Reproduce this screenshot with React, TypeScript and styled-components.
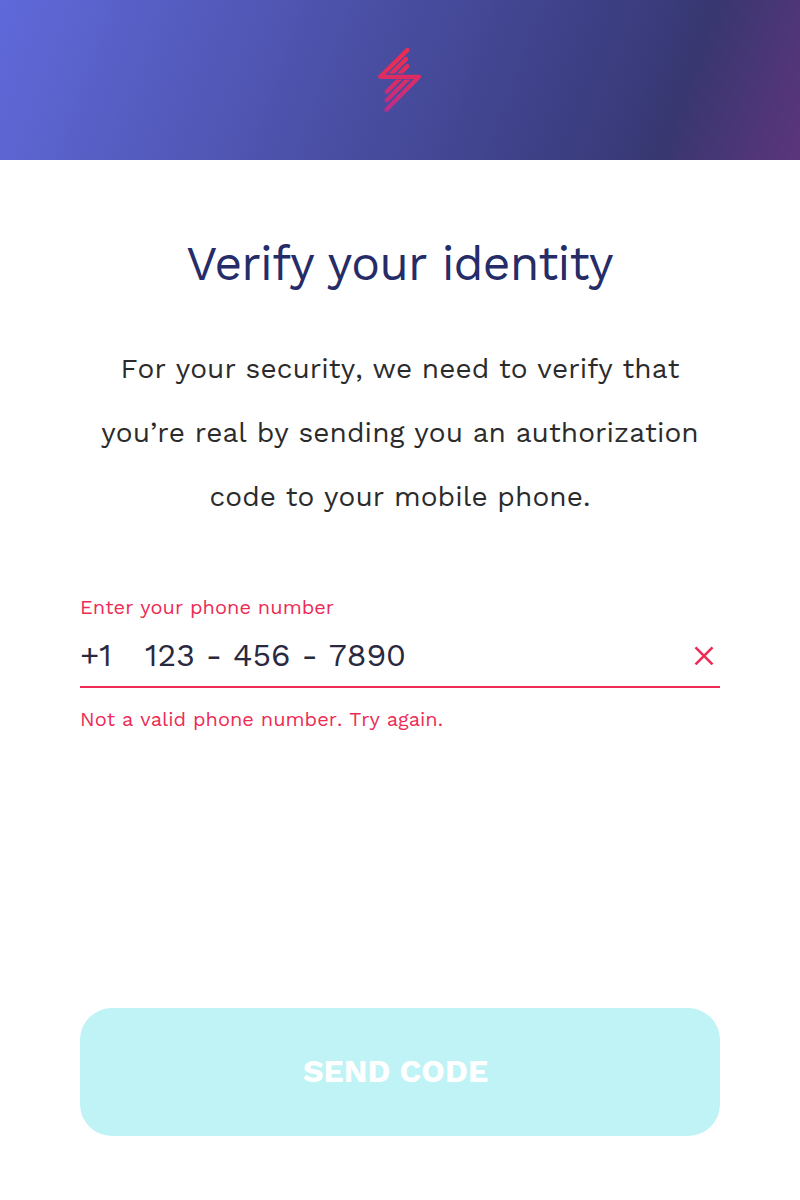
import React from "react";
import styled, { createGlobalStyle } from "styled-components";

const GlobalStyle = createGlobalStyle`
  * { box-sizing: border-box; }
  body { margin: 0; background: #ffffff; }
`;

const Screen = styled.main`
  display: flex;
  flex-direction: column;
  width: 800px;
  height: 1200px;
  background: #ffffff;
  font-family: "Work Sans", Inter, sans-serif;
`;

const Header = styled.header`
  display: flex;
  flex: none;
  align-items: center;
  justify-content: center;
  height: 160px;
  background: linear-gradient(110deg, #6069da 0%, #393b7b 78%, #383770 83.4%, #5c357c 100%);
`;

const Content = styled.section`
  display: flex;
  flex: 1;
  flex-direction: column;
  padding: 72px 80px 64px;
`;

const Title = styled.h1`
  margin: 0;
  height: 64px;
  line-height: 64px;
  font-size: 48px;
  font-weight: 400;
  letter-spacing: -0.84px;
  word-spacing: 0.4px;
  padding-right: 1px;
  text-align: center;
  white-space: nowrap;
  color: #252c68;
`;

const Description = styled.p`
  margin: 41px 0 0;
  color: #2b2b2b;
  font-size: 28px;
  line-height: 64px;
  letter-spacing: 0.09px;
  text-align: center;
  font-kerning: none;
`;

const Line = styled.span`
  display: block;
  white-space: nowrap;
`;

const Field = styled.div`
  margin-top: 66px;
  color: #ed2b55;
`;

const Note = styled.div`
  height: 24px;
  line-height: 24px;
  font-size: 20px;
  letter-spacing: 0.03px;
  white-space: nowrap;
  font-kerning: none;
`;

const InputRow = styled.div`
  display: flex;
  align-items: center;
  height: 69px;
  padding: 5px 6px 0 0;
  margin-bottom: 19px;
  border-bottom: 2px solid #ed2b55;
`;

const Phone = styled.span<{ $width?: number }>`
  width: ${(p) => (p.$width ? `${p.$width}px` : "auto")};
  flex: ${(p) => (p.$width ? "none" : "1")};
  font-size: 32px;
  line-height: 40px;
  white-space: nowrap;
  font-kerning: none;
  color: #29293f;
`;

const SendButton = styled.button`
  height: 128px;
  margin-top: auto;
  padding: 0 9px 2px 0;
  border: 0;
  border-radius: 32px;
  background: #c0f3f6;
  color: #ffffff;
  font-family: inherit;
  font-size: 32px;
  font-weight: 700;
`;

const Bolt = () => (
  <svg width="48" height="68" viewBox="376 46 48 68" fill="none">
    <defs>
      <linearGradient id="bolt" gradientUnits="userSpaceOnUse" x1="400" y1="48" x2="400" y2="112">
        <stop offset="0" stopColor="#f22b4c" />
        <stop offset="0.3" stopColor="#e82c58" />
        <stop offset="1" stopColor="#b92d8c" />
      </linearGradient>
      <clipPath id="upper">
        <rect x="376" y="46" width="48" height="27.6" />
      </clipPath>
      <clipPath id="lower">
        <rect x="376" y="79.6" width="48" height="34" />
      </clipPath>
    </defs>
    <g stroke="url(#bolt)" strokeWidth="4.2" strokeLinecap="round" strokeLinejoin="round">
      <path d="M407.4 50L380.2 76.8H419L386.4 109.8" />
      <g clipPath="url(#upper)">
        <path d="M406.1 59L388 77" />
        <path d="M407.2 66.2L396.4 77" />
      </g>
      <g clipPath="url(#lower)">
        <path d="M386.8 91.8L402 76.6" />
        <path d="M386.8 100.2L410.4 76.6" />
      </g>
    </g>
  </svg>
);

const Cross = () => (
  <svg width="20" height="20" viewBox="0 0 20 20" fill="none" stroke="#ed2b55" strokeWidth="2.5">
    <path d="M1.5 2.4L18.5 19.4M18.5 2.4L1.5 19.4" />
  </svg>
);

export default function App() {
  return (
    <Screen>
      <GlobalStyle />
      <Header>
        <Bolt />
      </Header>
      <Content>
        <Title>Verify your identity</Title>
        <Description>
          <Line>For your security, we need to verify that</Line>
          <Line>you’re real by sending you an authorization</Line>
          <Line>code to your mobile phone.</Line>
        </Description>
        <Field>
          <Note>Enter your phone number</Note>
          <InputRow>
            <Phone $width={65}>+1</Phone>
            <Phone>123 - 456 - 7890</Phone>
            <Cross />
          </InputRow>
          <Note>Not a valid phone number. Try again.</Note>
        </Field>
        <SendButton>SEND CODE</SendButton>
      </Content>
    </Screen>
  );
}
